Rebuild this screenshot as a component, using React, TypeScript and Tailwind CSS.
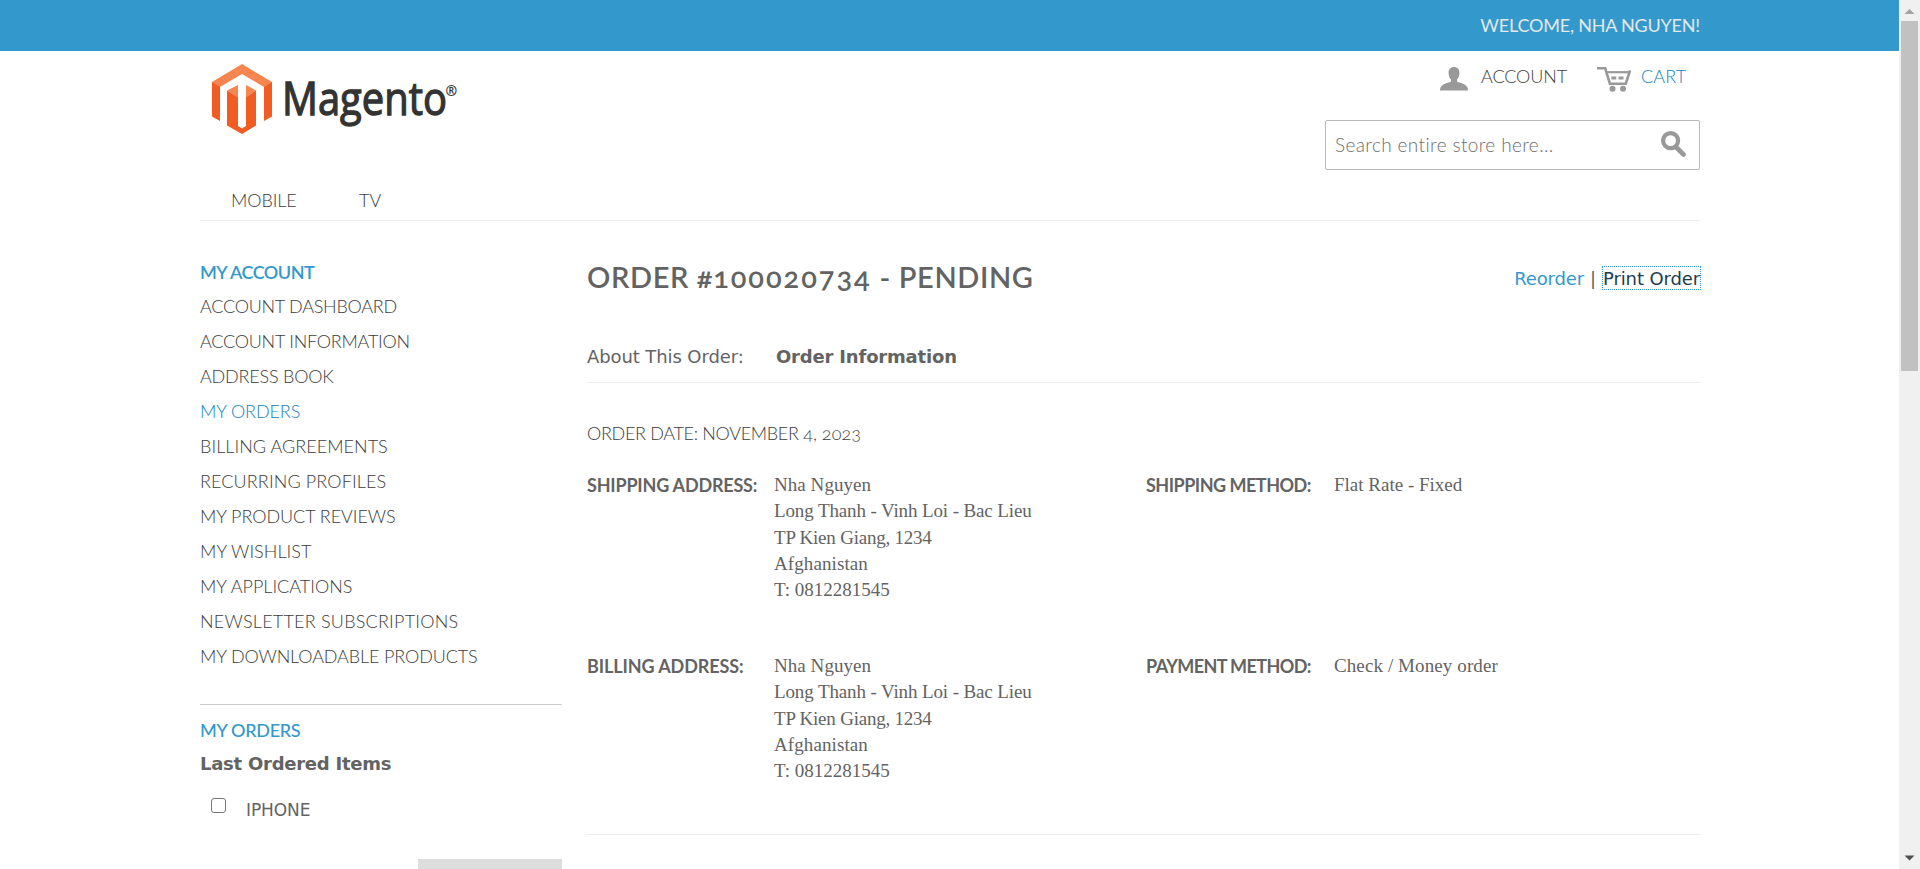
const SERIF = "font-['Liberation_Serif',serif]";

const accountLinks = [
  { label: 'ACCOUNT DASHBOARD', tracking: 'tracking-[-0.26px]' },
  { label: 'ACCOUNT INFORMATION', tracking: 'tracking-[-0.24px]' },
  { label: 'ADDRESS BOOK', tracking: 'tracking-[-0.2px]' },
  { label: 'MY ORDERS', tracking: 'tracking-[-0.1px]', active: true },
  { label: 'BILLING AGREEMENTS', tracking: 'tracking-[0.04px]' },
  { label: 'RECURRING PROFILES', tracking: 'tracking-[0.12px]' },
  { label: 'MY PRODUCT REVIEWS', tracking: 'tracking-[-0.06px]' },
  { label: 'MY WISHLIST', tracking: 'tracking-[0.05px]' },
  { label: 'MY APPLICATIONS', tracking: 'tracking-normal' },
  { label: 'NEWSLETTER SUBSCRIPTIONS', tracking: 'tracking-[0.22px]' },
  { label: 'MY DOWNLOADABLE PRODUCTS', tracking: 'tracking-[-0.13px]' },
];

const address = [
  { text: 'Nha Nguyen', tracking: 'tracking-[0.05px]' },
  { text: 'Long Thanh - Vinh Loi - Bac Lieu', tracking: 'tracking-[-0.12px]' },
  { text: 'TP Kien Giang, 1234', tracking: 'tracking-[-0.22px]' },
  { text: 'Afghanistan', tracking: 'tracking-[0.1px]' },
  { text: 'T: 0812281545', tracking: 'tracking-normal' },
];

function Logo() {
  return (
    <svg width="250" height="76" viewBox="0 0 250 76" className="block overflow-visible">
      <path d="M0 18 L30 0 L60 18 V22 L52 23 L30 10 L8 23 L0 22 Z" fill="#f6854f" />
      <path d="M0 18 L8 23 V57 L0 52.5 Z M60 18 L52 23 V57 L60 52.5 Z" fill="#f15c22" />
      <path d="M15 26.5 L26 33 V62 L30 64.5 L34 62 V33 L44 26.5 V61.5 L30 70 L15 61.5 Z" fill="#f15c22" />
      <path d="M15 26.5 L26 33.5 V21 Z M44 26.5 L34 33.5 V21 Z" fill="#f6854f" />
      <text x="70" y="51" fontSize="46" fontWeight="500" fill="#333333" stroke="#333333" strokeWidth="1.3" textLength="165" lengthAdjust="spacingAndGlyphs" className="font-['Open_Sans',sans-serif]">Magento</text>
      <text x="233.5" y="32" fontSize="14" fontWeight="700" fill="#333333" className="font-['Open_Sans',sans-serif]">®</text>
    </svg>
  );
}

function AccountIcon() {
  return (
    <svg width="28" height="24" viewBox="0 0 28 24" fill="#999999" className="block">
      <path d="M14 0C10.5 0 8.4 2.4 8.6 6C8.7 9 9.6 11.2 11 12.6V14.6C10 15.5 5.5 16 2.5 18.2C.6 19.6 0 21.2 0 23.6H28C28 21.2 27.4 19.6 25.5 18.2C22.5 16 18 15.5 17 14.6V12.6C18.4 11.2 19.3 9 19.4 6C19.6 2.4 17.5 0 14 0Z" />
    </svg>
  );
}

function CartIcon() {
  return (
    <svg width="34" height="25" viewBox="0 0 34 25" fill="none" stroke="#999999" className="block">
      <path d="M0 1.3H8.2L12.9 16.7H28.8L33 3.5" strokeWidth="2.6" />
      <path d="M10 5.2H32.5" strokeWidth="2.2" />
      <path d="M14.3 11H19.3M21.5 11H26.5" strokeWidth="3" />
      <circle cx="15.5" cy="21.700" r="3" fill="#999999" stroke="none" />
      <circle cx="26" cy="21.700" r="3" fill="#999999" stroke="none" />
    </svg>
  );
}

function SearchIcon() {
  return (
    <svg width="25" height="26" viewBox="0 0 25 26" fill="none" stroke="#999999" className="block">
      <circle cx="9.6" cy="9.6" r="7.5" strokeWidth="4.200" />
      <path d="M15 16L22.5 23.5" strokeWidth="4.600" strokeLinecap="round" />
    </svg>
  );
}

function AddressLines() {
  return (
    <div className={`w-[373px] text-[19px] leading-[26.25px] ${SERIF}`}>
      {address.map((l) => (
        <p key={l.text} className={l.tracking}>{l.text}</p>
      ))}
    </div>
  );
}

export default function App() {
  return (
    <div className="flex h-[869px] w-full overflow-hidden bg-white font-['Lato',sans-serif] text-[18px] text-[#636363]">
      <div className="w-[1899px] shrink-0">
        <div className="h-[51px] bg-[#3399cc] pl-[200px]">
          <p className="w-[1500px] pt-[14px] text-right leading-[22px] tracking-[-0.2px] text-[#e4e8ea]">WELCOME, NHA NGUYEN!</p>
        </div>

        <div className="ml-[200px] w-[1500px]">
          <header className="flex h-[135px] justify-between">
            <div className="pt-[13px] pl-3">
              <Logo />
            </div>
            <div className="flex w-[375px] flex-col">
              <div className="flex h-[69px] pt-4 pl-[115px] font-light text-[#3c3c3c]">
                <AccountIcon />
                <span className="-mt-px ml-[13px] w-[116px] leading-[20px] tracking-[-0.1px]">ACCOUNT</span>
                <CartIcon />
                <span className="-mt-px ml-[10px] leading-[20px] tracking-[0.15px] text-[#1583c0]">CART</span>
              </div>
              <div className="flex h-[50px] items-start justify-between rounded-[2px] border border-[#b8b8b8] pt-[10px] pr-[13px] pl-[9px]">
                <span className="pt-px text-[19px] leading-[26px] font-light tracking-[0.38px] text-[#6e6e6e]">Search entire store here...</span>
                <SearchIcon />
              </div>
            </div>
          </header>
          <nav className="flex h-[35px] border-b border-[#ededed] pl-[31px] leading-[29px] font-light text-[#3c3c3c]">
            <span className="w-[128px] tracking-[-0.1px]">MOBILE</span>
            <span>TV</span>
          </nav>

          <div className="flex justify-between">
            <aside className="w-[362px] pt-[41px]">
              <h2 className="leading-[20px] font-semibold tracking-[-0.5px] text-[#3399cc]">MY ACCOUNT</h2>
              <ul className="mt-[7px] leading-[35px] font-light text-[#3c3c3c]">
                {accountLinks.map((l) => (
                  <li key={l.label} className={`${l.tracking} ${l.active ? 'text-[#1583c0]' : ''}`}>{l.label}</li>
                ))}
              </ul>
              <section className="mt-[30px] border-t border-[#cccccc] pt-[15px]">
                <h2 className="leading-[20px] font-medium tracking-[-0.3px] text-[#3399cc]">MY ORDERS</h2>
                <h3 className="mt-3 font-['DejaVu_Sans',sans-serif] leading-[24px] font-bold tracking-[-0.25px]">Last Ordered Items</h3>
                <div className="mt-[22px] flex pl-[11px]">
                  <span className="h-[15px] w-[15px] rounded-[3px] border border-[#767676]" />
                  <span className="ml-[20px] font-['DejaVu_Sans',sans-serif] text-[17px] leading-[24px] tracking-[-0.1px]">IPHONE</span>
                </div>
                <div className="mt-[37px] ml-auto h-[40px] w-[144px] bg-[#dddddd]" />
              </section>
            </aside>

            <main className="w-[1113px] pt-[36px]">
              <div className="flex h-[82px] justify-between">
                <h1 className="text-[29px] leading-[39px] font-semibold tracking-[0.62px] oldstyle-nums">
                  ORDER #<span className="tracking-[1.95px]">100020734</span> - PENDING
                </h1>
                <div className="flex h-[34px] gap-[6px] pt-[9px] font-['DejaVu_Sans',sans-serif] leading-[26px]">
                  <span className="tracking-[-0.15px] text-[#3399cc]">Reorder</span>
                  <span>|</span>
                  <span className="-mr-px h-[24px] border border-dotted border-[#3399cc] leading-[24px] tracking-[-0.12px] text-[#1b3d50]">Print Order</span>
                </div>
              </div>
              <div className="flex h-[44px] border-b border-[#ededed] pt-[6px] font-['DejaVu_Sans',sans-serif] leading-[24px]">
                <span className="w-[189px] tracking-[-0.1px]">About This Order:</span>
                <strong className="tracking-[-0.18px]">Order Information</strong>
              </div>
              <p className="mt-[40px] leading-[20px] font-light tracking-[-0.32px] text-[#3c3c3c] oldstyle-nums">
                ORDER DATE: NOVEMBER <span className="tracking-[0.05px]">4, 2023</span>
              </p>
              <div className="mt-[29px] flex h-[181px]">
                <h2 className="w-[187px] leading-[26px] font-bold tracking-[-0.2px]">SHIPPING ADDRESS:</h2>
                <AddressLines />
                <h2 className="-ml-px w-[188px] leading-[26px] font-bold tracking-[-0.5px]">SHIPPING METHOD:</h2>
                <p className={`text-[19px] leading-[26.25px] ${SERIF}`}>Flat Rate - Fixed</p>
              </div>
              <div className="flex h-[182px] border-b border-[#ededed]">
                <h2 className="w-[187px] leading-[26px] font-bold tracking-[-0.1px]">BILLING ADDRESS:</h2>
                <AddressLines />
                <h2 className="-ml-px w-[188px] leading-[26px] font-bold tracking-[-0.6px]">PAYMENT METHOD:</h2>
                <p className={`text-[19px] leading-[26.25px] tracking-[0.1px] ${SERIF}`}>Check / Money order</p>
              </div>
            </main>
          </div>
        </div>
      </div>

      <div className="flex w-[21px] shrink-0 flex-col items-center bg-[#f0f0f0]">
        <svg width="21" height="21" viewBox="0 0 21 21"><path d="M5.5 14L10.5 9L15.5 14Z" fill="#a3a3a3" /></svg>
        <div className="h-[350px] w-[17px] bg-[#c1c1c1]" />
        <svg width="21" height="21" viewBox="0 0 21 21" className="mt-auto"><path d="M5.5 7.5L10.5 12.5L15.5 7.5Z" fill="#505050" /></svg>
      </div>
    </div>
  );
}
